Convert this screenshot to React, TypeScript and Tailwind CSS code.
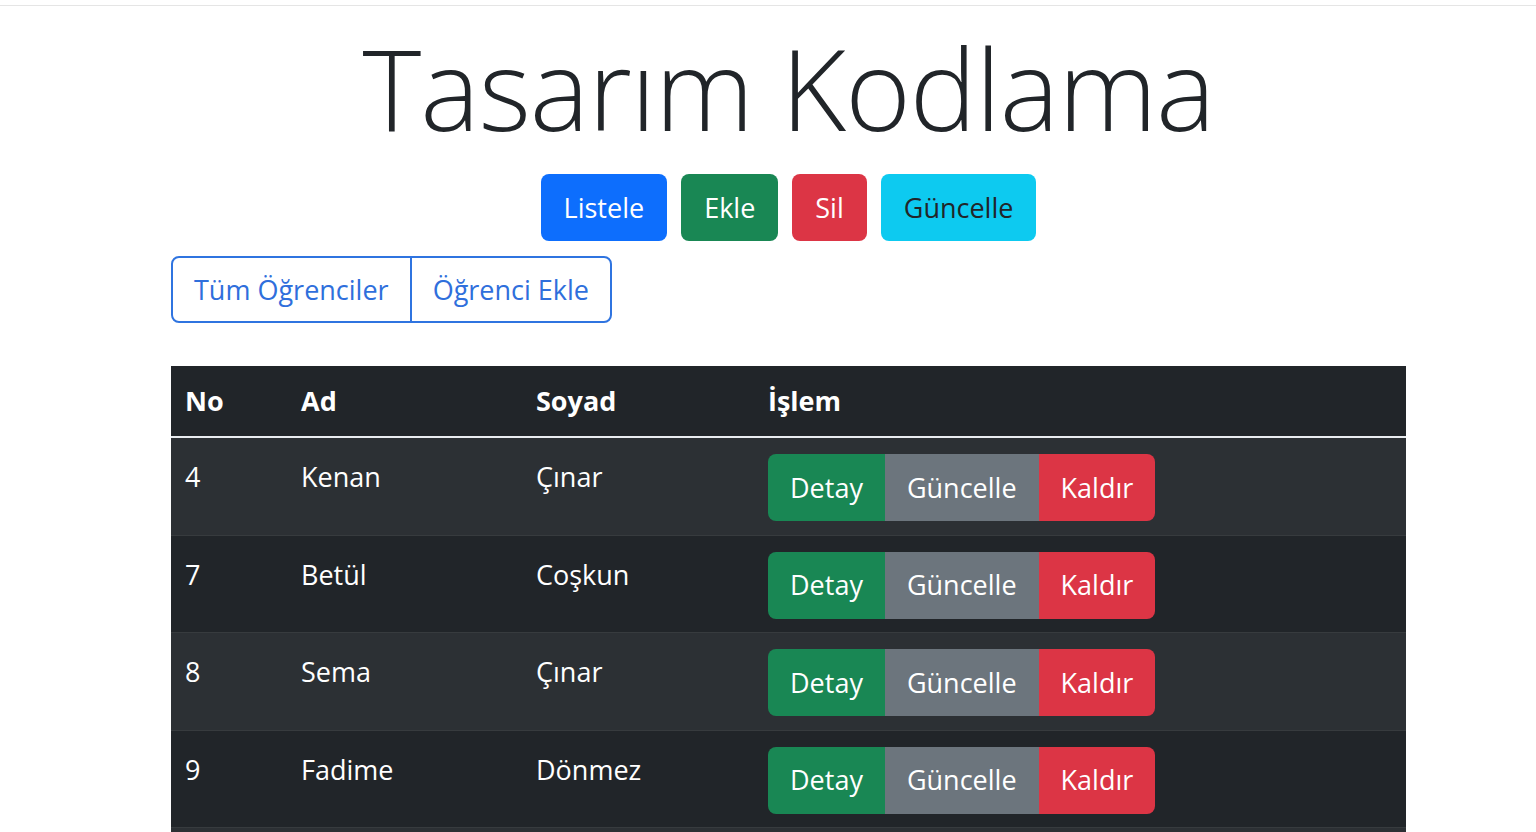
import React from "react";

const rows = [
  { no: "4", ad: "Kenan", soyad: "Çınar" },
  { no: "7", ad: "Betül", soyad: "Coşkun" },
  { no: "8", ad: "Sema", soyad: "Çınar" },
  { no: "9", ad: "Fadime", soyad: "Dönmez" },
];

export default function App() {
  return (
    <div
      className="h-[832px] bg-white overflow-hidden"
      style={{ fontFamily: '"Open Sans", "Noto Sans", sans-serif' }}
    >
      <div className="h-[5px]" />
      <div className="h-px bg-[#e5e5e5]" />
      <div className="ml-[171px] w-[1235px]">
        <h1 className="text-center text-[112px] leading-[1.2] font-light text-[#212529] tracking-[-1px] mt-[15px]">
          Tasarım Kodlama
        </h1>
        <div className="flex justify-center gap-[14px] mt-[19px]">
          <button className="h-[67px] px-[23px] rounded-[8px] bg-[#0d6efd] text-white text-[27px]">Listele</button>
          <button className="h-[67px] px-[23px] rounded-[8px] bg-[#198754] text-white text-[27px]">Ekle</button>
          <button className="h-[67px] px-[23px] rounded-[8px] bg-[#dc3545] text-white text-[27px]">Sil</button>
          <button className="h-[67px] px-[23px] rounded-[8px] bg-[#0dcaf0] text-[#212529] text-[27px]">Güncelle</button>
        </div>
        <div className="mt-[15px] inline-flex rounded-[8px] border-2 border-[#2f74e0] overflow-hidden">
          <button className="h-[63px] px-[21px] text-[27px] text-[#2f6fdc] border-r-2 border-[#2f74e0]">Tüm Öğrenciler</button>
          <button className="h-[63px] px-[21px] text-[27px] text-[#2f6fdc]">Öğrenci Ekle</button>
        </div>
        <table className="mt-[43px] w-full border-collapse text-white text-[27px]">
          <thead>
            <tr className="bg-[#212529] border-b-2 border-[#e9ecef]">
              <th className="text-left font-bold px-[14px] h-[71px] w-[116px]">No</th>
              <th className="text-left font-bold px-[14px] w-[235px]">Ad</th>
              <th className="text-left font-bold px-[14px] w-[232px]">Soyad</th>
              <th className="text-left font-bold px-[14px]">İşlem</th>
            </tr>
          </thead>
          <tbody>
            {rows.map((r, i) => (
              <tr
                key={r.no}
                className={`${i % 2 === 0 ? "bg-[#2c3034]" : "bg-[#212529]"} border-b border-[#373b3e]`}
              >
                <td className="align-top px-[14px] pt-[18px] leading-[42px]">{r.no}</td>
                <td className="align-top px-[14px] pt-[18px] leading-[42px]">{r.ad}</td>
                <td className="align-top px-[14px] pt-[18px] leading-[42px]">{r.soyad}</td>
                <td className="align-top px-[14px] pt-[16px] pb-[13.5px]">
                  <div className="inline-flex rounded-[8px] overflow-hidden">
                    <button className="h-[67px] px-[22px] bg-[#198754] text-white text-[27px]">Detay</button>
                    <button className="h-[67px] px-[22px] bg-[#6c757d] text-white text-[27px]">Güncelle</button>
                    <button className="h-[67px] px-[22px] bg-[#dc3545] text-white text-[27px]">Kaldır</button>
                  </div>
                </td>
              </tr>
            ))}
            <tr className="bg-[#2c3034]">
              <td colSpan={4} className="h-[40px]" />
            </tr>
          </tbody>
        </table>
      </div>
    </div>
  );
}
